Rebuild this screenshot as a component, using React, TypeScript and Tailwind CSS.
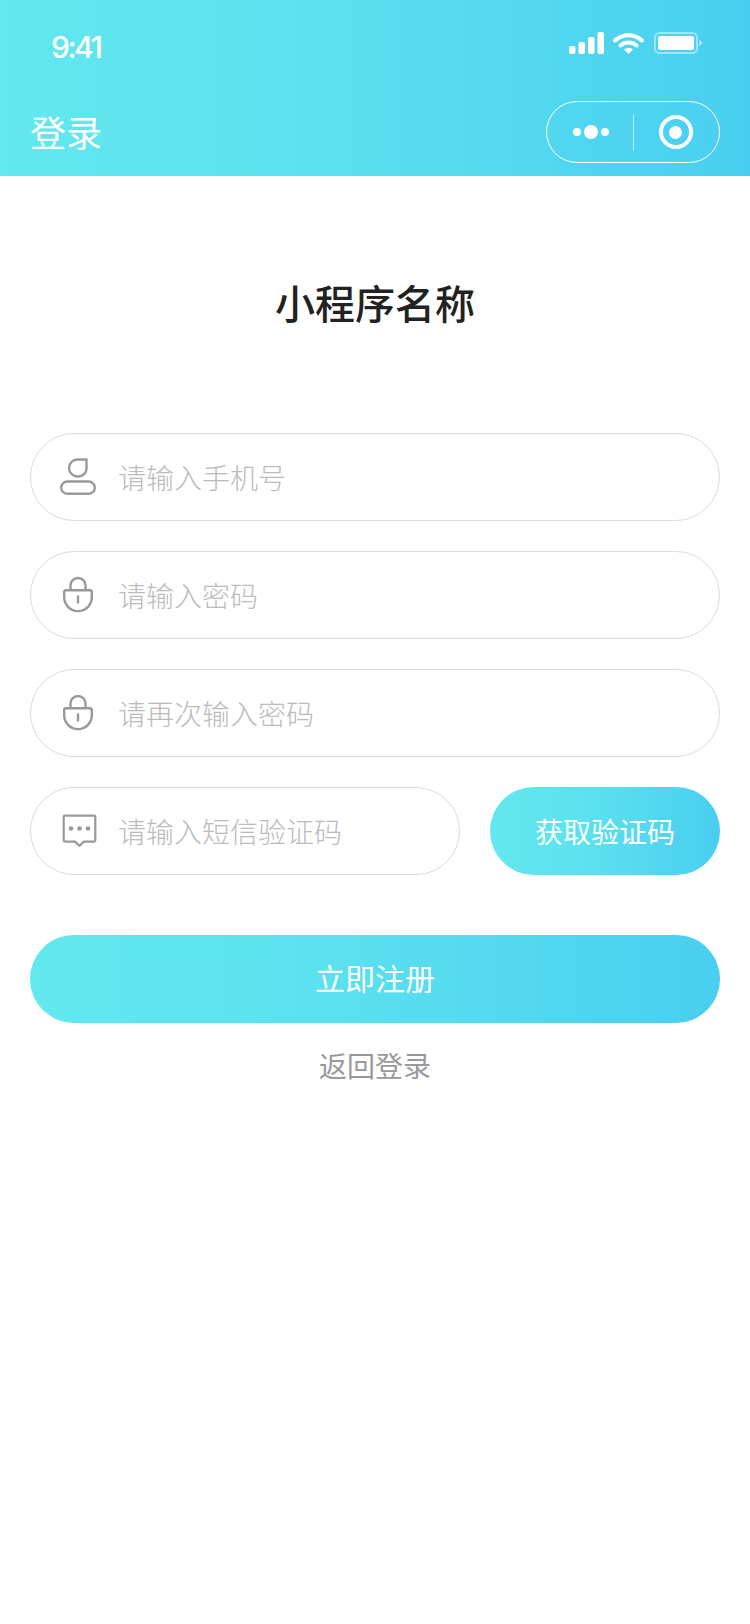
import React from 'react'

const cjk = { fontFamily: '"Noto Sans CJK SC", "Noto Sans", sans-serif' }

function UserIcon() {
  return (
    <svg width="40" height="40" viewBox="0 0 40 40" fill="none" stroke="#999999" strokeWidth="2.4">
      <path d="M19.500 2.500h9v9a8 8 0 0 1-8 8h-1a8.500 8.500 0 0 1 0-17z" strokeLinejoin="round" />
      <rect x="3.200" y="24.500" width="33.600" height="12.300" rx="6.150" />
    </svg>
  )
}

function LockIcon() {
  return (
    <svg width="40" height="40" viewBox="0 0 40 40" fill="none" stroke="#999999" strokeWidth="2.400">
      <path d="M12.500 15.500v-5a7.500 7.500 0 0 1 15 0v5" />
      <path d="M8 15.300h24a1.800 1.800 0 0 1 1.800 1.800v5.200a13.800 13.800 0 0 1-27.600 0v-5.200a1.800 1.800 0 0 1 1.800-1.800z" />
      <path d="M20 21.500v6" strokeLinecap="round" />
    </svg>
  )
}

function MessageIcon() {
  return (
    <svg width="40" height="40" viewBox="0 0 40 40" fill="none">
      <path
        d="M7 4.700h29a1.300 1.300 0 0 1 1.300 1.300v23.300a1.300 1.300 0 0 1-1.300 1.300H26l-4.500 4.200-4.500-4.200H7a1.300 1.300 0 0 1-1.300-1.300V6A1.300 1.300 0 0 1 7 4.700z"
        stroke="#999999"
        strokeWidth="2.200"
        strokeLinejoin="round"
      />
      <circle cx="13" cy="17.500" r="2.300" fill="#999999" />
      <circle cx="21.500" cy="17.500" r="2.300" fill="#999999" />
      <circle cx="30" cy="17.500" r="2.300" fill="#999999" />
    </svg>
  )
}

function Field({ icon, placeholder, className }: { icon: React.ReactNode; placeholder: string; className: string }) {
  return (
    <div className={`flex h-[88px] items-center rounded-full border border-[#dcdcdc] bg-white pl-[27px] ${className}`}>
      <div className="h-[40px] w-[40px] shrink-0">{icon}</div>
      <input
        readOnly
        placeholder={placeholder}
        style={cjk}
        className="ml-[20px] min-w-0 flex-1 bg-transparent text-[28px] font-light text-[#333333] outline-none placeholder:text-[#bbbbbb]"
      />
    </div>
  )
}

export default function App() {
  return (
    <div className="min-h-[1624px] w-[750px] bg-white" style={cjk}>
      {/* 顶部导航 */}
      <div className="h-[176px] bg-linear-to-r/srgb from-[#63e8ef] via-[#5be0ef] via-45% to-[#49cef0]">
        <div className="flex h-[84px] items-start justify-between pl-[51px] pr-[47px] pt-[32px]">
          <span
            className="text-[30px] font-medium leading-[30px] tracking-[-2.500px] text-white"
            style={{ fontFamily: 'Inter, sans-serif' }}
          >
            9:41
          </span>
          <svg width="134" height="22" viewBox="0 0 134 22" fill="none">
            <rect x="0" y="14" width="6.500" height="8" rx="2" fill="#fff" />
            <rect x="9.500" y="10" width="6.500" height="12" rx="2" fill="#fff" />
            <rect x="19" y="5" width="6.500" height="17" rx="2" fill="#fff" />
            <rect x="28.500" y="0" width="6.500" height="22" rx="2" fill="#fff" />
            <path d="M46 8.500a20 20 0 0 1 27 0" stroke="#fff" strokeWidth="4" strokeLinecap="round" />
            <path d="M51.500 13.500a12.500 12.500 0 0 1 16 0" stroke="#fff" strokeWidth="4" strokeLinecap="round" />
            <path d="M55 17.500a7.500 7.500 0 0 1 9 0L59.500 22z" fill="#fff" />
            <rect x="86" y="1" width="42" height="20" rx="4.500" stroke="#ffffff" strokeOpacity="0.45" strokeWidth="2" />
            <rect x="89" y="4" width="36" height="14" rx="2" fill="#fff" />
            <path d="M130 8c2 .4 3 1.600 3 3s-1 2.600-3 3z" fill="#ffffff" fillOpacity="0.5" />
          </svg>
        </div>
        <div className="flex items-center justify-between pl-[30px] pr-[30px] pt-[17px]">
          <span className="pb-[2px] text-[36px] leading-[60px] font-normal text-white">登录</span>
          <div className="flex h-[62px] w-[174px] items-center rounded-full border border-white">
            <div className="flex w-[86px] items-center justify-center gap-[3px] pl-[2px]">
              <span className="h-[8px] w-[8px] rounded-full bg-white" />
              <span className="h-[14px] w-[14px] rounded-full bg-white" />
              <span className="h-[8px] w-[8px] rounded-full bg-white" />
            </div>
            <div className="h-[37px] w-px bg-white/60" />
            <div className="flex flex-1 items-center justify-center pr-[2px]">
              <div className="flex h-[34px] w-[34px] items-center justify-center rounded-full border-[4px] border-white">
                <span className="h-[13px] w-[13px] rounded-full bg-white" />
              </div>
            </div>
          </div>
        </div>
      </div>

      <h1 className="mt-[95px] text-center text-[40px] font-medium leading-[62px] text-[#222222]">小程序名称</h1>

      {/* 注册表单 */}
      <div className="mt-[100px] flex flex-col gap-[30px] px-[30px]">
        <Field icon={<UserIcon />} placeholder="请输入手机号" className="" />
        <Field icon={<LockIcon />} placeholder="请输入密码" className="" />
        <Field icon={<LockIcon />} placeholder="请再次输入密码" className="" />
        <div className="flex gap-[30px]">
          <Field icon={<MessageIcon />} placeholder="请输入短信验证码" className="w-[430px]" />
          <button className="h-[88px] flex-1 rounded-full bg-linear-to-r/srgb from-[#63e8ef] via-[#5be0ef] via-45% to-[#49cef0] text-[28px] text-white">
            获取验证码
          </button>
        </div>
      </div>

      <div className="mt-[60px] px-[30px]">
        <button className="h-[88px] w-full rounded-full bg-linear-to-r/srgb from-[#63e8ef] via-[#5be0ef] via-45% to-[#49cef0] pb-[3px] text-[30px] text-white">
          立即注册
        </button>
        <p className="mt-[22px] text-center text-[28px] leading-[40px] text-[#999999]">返回登录</p>
      </div>
    </div>
  )
}
